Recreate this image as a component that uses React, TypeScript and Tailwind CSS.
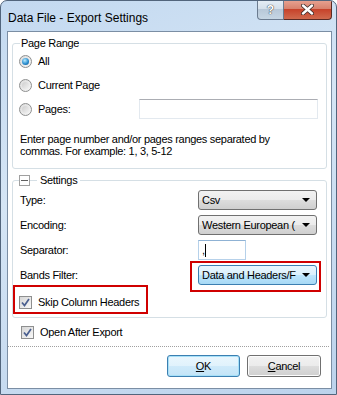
import React from 'react';

const body = "font-['Liberation_Sans',Arial,sans-serif] text-[11px] tracking-[-0.3px] text-black";

const Radio = ({ checked }: { checked?: boolean }) => (
  <span className="w-[13px] h-[13px] rounded-full border border-[#8e8f8f] bg-[linear-gradient(135deg,#dcdcdc,#f6f6f6)] flex items-center justify-center shrink-0">
    {checked ? (
      <span className="w-[7px] h-[7px] rounded-full bg-[radial-gradient(circle_at_40%_35%,#b9ecff,#2c8fd0_55%,#0c4f87)]" />
    ) : (
      <span className="w-[7px] h-[7px] rounded-full bg-[linear-gradient(135deg,#cfcfcf,#f2f2f2)]" />
    )}
  </span>
);

const Check = () => (
  <span className="w-[13px] h-[13px] border border-[#8e8f8f] bg-[linear-gradient(135deg,#d6d6d6,#f8f8f8)] flex items-center justify-center shrink-0">
    <svg width="9" height="9" viewBox="0 0 9 9">
      <path d="M1 4.5 L3.5 7.5 L8 1" fill="none" stroke="#4a5f8f" strokeWidth="1.7" />
    </svg>
  </span>
);

const Arrow = () => (
  <svg width="8" height="4" viewBox="0 0 8 4" className="shrink-0">
    <path d="M0 0 H8 L4 4 Z" fill="#000" />
  </svg>
);

const Combo = ({ value, hot }: { value: string; hot?: boolean }) => (
  <div
    className={`w-[119px] h-[20px] rounded-[3px] border flex items-center pl-[3px] pr-[6px] gap-1 ${
      hot
        ? 'border-[#3c7fb1] bg-[linear-gradient(#eaf6fd_0%,#d9f0fc_50%,#bee6fd_50%,#a7d9f5_100%)]'
        : 'border-[#707070] bg-[linear-gradient(#f2f2f2_0%,#ebebeb_50%,#dddddd_50%,#cfcfcf_100%)]'
    }`}
  >
    <span className="flex-1 whitespace-nowrap">{value}</span>
    <Arrow />
  </div>
);

const Legend = ({ children }: { children: React.ReactNode }) => (
  <div className="-mt-[8px] h-[15px] flex items-center">{children}</div>
);

export default function App() {
  return (
    <div className="w-[337px] h-[395px] overflow-hidden rounded-t-[7px] border border-[#52657c] bg-[linear-gradient(160deg,#c3d9f0_0%,#d5e5f5_40%,#bcd3ec_100%)] flex flex-col">
      {/* title bar */}
      <div className="h-[30px] flex items-start shrink-0">
        <div className="pl-[7px] pt-[8px] font-['Liberation_Sans',Arial,sans-serif] text-[12px] text-black flex-1">
          Data File - Export Settings
        </div>
        <div className="flex mr-[4px] -mt-px">
          <div className="w-[27px] h-[20px] rounded-bl-[4px] border border-[#6b7b8f] border-t-0 bg-[linear-gradient(#e6eef6_0%,#d3dfea_50%,#b8c8d8_50%,#c6d6e4_100%)] flex items-center justify-center">
            <span className="font-['Liberation_Sans',Arial,sans-serif] text-[12px] font-bold text-white [text-shadow:0_0_1px_#333,0_0_1px_#333]">?</span>
          </div>
          <div className="w-[48px] h-[20px] rounded-br-[4px] border border-[#5a2a24] border-t-0 border-l-0 bg-[linear-gradient(#e8a493_0%,#d8826d_45%,#c7432b_50%,#d06a4e_100%)] flex items-center justify-center">
            <svg width="13" height="11" viewBox="0 0 13 11">
              <path d="M2 1.5 L11 9.5 M11 1.5 L2 9.5" stroke="#3a2a28" strokeWidth="4" strokeLinecap="round" />
              <path d="M2 1.5 L11 9.5 M11 1.5 L2 9.5" stroke="#fff" strokeWidth="2.4" strokeLinecap="round" />
            </svg>
          </div>
        </div>
      </div>

      {/* client area */}
      <div className={`ml-[6px] mr-[4px] h-[358px] bg-white border border-[#7b8ea4] flex flex-col ${body}`}>
        {/* Page Range */}
        <div className="mt-[11px] mx-[4px] border border-[#d5dfe5] rounded-[3px] pl-[6px] pr-[7px] pb-[11px]">
          <Legend>
            <span className="ml-[1px] px-[1px] bg-white leading-[15px]">Page Range</span>
          </Legend>
          <div className="h-[20px] flex items-center gap-[6px]">
            <Radio checked />
            <span>All</span>
          </div>
          <div className="mt-[4px] h-[20px] flex items-center gap-[6px]">
            <Radio />
            <span>Current Page</span>
          </div>
          <div className="mt-[4px] h-[20px] flex items-center">
            <Radio />
            <span className="ml-[6px] w-[101px]">Pages:</span>
            <div className="w-[179px] h-[20px] border border-[#e3e9ef] border-t-[#abadb3] bg-white" />
          </div>
          <p className="mt-[14px] pl-[1px] leading-[12px]">
            Enter page number and/or pages ranges separated by
            <br />
            commas. For example: 1, 3, 5-12
          </p>
        </div>

        {/* Settings */}
        <div className="mt-[11px] mx-[4px] border border-[#d5dfe5] rounded-[3px] pl-[6px] pr-[7px] pb-[5px]">
          <Legend>
            <span className="w-[11px] h-[11px] border border-[#a0a0a0] bg-white flex items-center justify-center">
              <span className="w-[7px] h-px bg-[#606060]" />
            </span>
            <span className="ml-[7px] px-[3px] bg-white leading-[15px]">Settings</span>
          </Legend>
          <div className="mt-[2px] flex flex-col gap-[5px]">
            <div className="h-[20px] flex items-center pl-px">
              <span className="w-[178px]">Type:</span>
              <Combo value="Csv" />
            </div>
            <div className="h-[20px] flex items-center pl-px">
              <span className="w-[178px]">Encoding:</span>
              <Combo value="Western European (" />
            </div>
            <div className="h-[20px] flex items-center pl-px">
              <span className="w-[178px]">Separator:</span>
              <div className="w-[48px] h-[20px] border border-[#b6d1ea] border-t-[#8fb2d4] flex items-center pl-[3px]">
                <span>,</span>
                <span className="w-px h-[13px] bg-black" />
              </div>
            </div>
            <div className="h-[20px] flex items-center pl-px">
              <span className="w-[178px]">Bands Filter:</span>
              <div className="relative">
                <Combo value="Data and Headers/F" hot />
                <div className="absolute left-[-8px] top-[-4px] w-[131px] h-[31px] border-2 border-[#d00000]" />
              </div>
            </div>
          </div>
          <div className="mt-[7px] h-[20px] flex items-center">
            <div className="relative flex items-center gap-[6px]">
              <Check />
              <span>Skip Column Headers</span>
              <div className="absolute left-[-6px] top-[-9px] w-[135px] h-[29px] border-2 border-[#d00000]" />
            </div>
          </div>
        </div>

        <div className="mt-[4px] h-[20px] pl-[13px] flex items-center gap-[6px]">
          <Check />
          <span>Open After Export</span>
        </div>

        <div className="mt-[4px] mr-[2px] border-t border-dotted border-[#a0a0a0]" />

        <div className="mt-[8px] pr-[10px] flex justify-end gap-[7px]">
          <button className="w-[73px] h-[22px] rounded-[3px] border border-[#3c7fb1] bg-[linear-gradient(#eaf6fd_0%,#e0f2fc_50%,#cfeafa_50%,#c3e4f7_100%)] shadow-[inset_0_0_0_1px_#a6e0f8]">
            <span className="underline underline-offset-1">O</span>K
          </button>
          <button className="w-[74px] h-[22px] rounded-[3px] border border-[#707070] bg-[linear-gradient(#f2f2f2_0%,#ebebeb_50%,#dddddd_50%,#cfcfcf_100%)] shadow-[inset_0_0_0_1px_#fcfcfc]">
            <span className="underline underline-offset-1">C</span>ancel
          </button>
        </div>
      </div>
    </div>
  );
}
